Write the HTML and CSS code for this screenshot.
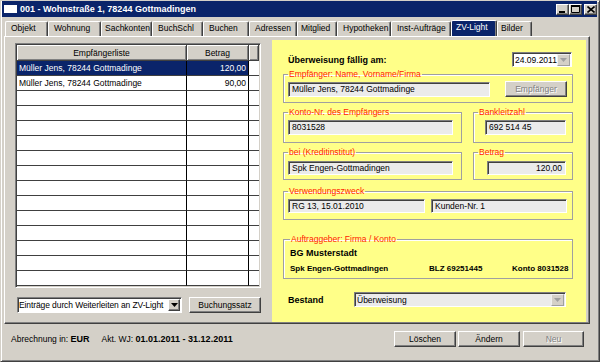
FILE: index.html
```html
<!DOCTYPE html>
<html lang="de">
<head>
  <meta charset="UTF-8" />
  <title>001 - Wohnstraße 1, 78244 Gottmadingen</title>
  <link rel="stylesheet" href="styles.css">
</head>
<body>
<div class="window">
  <div class="titlebar">
    <span class="app-icon"></span>
    <span class="title">001 - Wohnstraße 1, 78244 Gottmadingen</span>
    <div class="caption-btns">
      <span class="cbtn"><svg width="7" height="7" viewBox="0 0 7 7"><rect x="0" y="5" width="6" height="2"/></svg></span>
      <span class="cbtn"><svg width="9" height="8" viewBox="0 0 9 8"><path d="M0.5 0.5h8v7h-8z" fill="none" stroke="#000"/><rect x="0" y="0" width="9" height="2"/></svg></span>
      <span class="cbtn cbtn-close"><svg width="8" height="7" viewBox="0 0 8 7"><path d="M0.5 0.5l7 6M7.5 0.5l-7 6" stroke="#000" stroke-width="1.6"/></svg></span>
    </div>
  </div>

  <div class="tabs">
    <span class="tab">Objekt</span>
    <span class="tab">Wohnung</span>
    <span class="tab">Sachkonten</span>
    <span class="tab">BuchSchl</span>
    <span class="tab">Buchen</span>
    <span class="tab">Adressen</span>
    <span class="tab">Mitglied</span>
    <span class="tab">Hypotheken</span>
    <span class="tab">Inst-Aufträge</span>
    <span class="tab active">ZV-Light</span>
    <span class="tab">Bilder</span>
  </div>

  <div class="tabpanel">
    <div class="left">
      <div class="grid-frame">
        <table class="grid">
          <colgroup><col class="c-name"><col class="c-amount"><col class="c-pad"></colgroup>
          <thead>
            <tr><th>Empfängerliste</th><th>Betrag</th><th></th></tr>
          </thead>
          <tbody>
            <tr class="sel"><td>Müller Jens, 78244 Gottmadinge</td><td class="num">120,00</td><td></td></tr>
            <tr><td>Müller Jens, 78244 Gottmadinge</td><td class="num">90,00</td><td></td></tr>
            <tr><td></td><td></td><td></td></tr>
            <tr><td></td><td></td><td></td></tr>
            <tr><td></td><td></td><td></td></tr>
            <tr><td></td><td></td><td></td></tr>
            <tr><td></td><td></td><td></td></tr>
            <tr><td></td><td></td><td></td></tr>
            <tr><td></td><td></td><td></td></tr>
            <tr><td></td><td></td><td></td></tr>
            <tr><td></td><td></td><td></td></tr>
            <tr><td></td><td></td><td></td></tr>
            <tr><td></td><td></td><td></td></tr>
            <tr><td></td><td></td><td></td></tr>
            <tr><td></td><td></td><td></td></tr>
          </tbody>
        </table>
      </div>
      <div class="left-tools">
        <div class="combo combo-forward">
          <span class="combo-text">Einträge durch Weiterleiten an ZV-Light</span>
          <span class="combo-btn"><svg width="7" height="4" viewBox="0 0 7 4"><path d="M0 0h7L3.5 4z"/></svg></span>
        </div>
        <button class="btn btn-booking">Buchungssatz</button>
      </div>
    </div>

    <div class="zv">
      <div class="due">
        <span class="label-bold">Überweisung fällig am:</span>
        <div class="combo combo-date">
          <span class="combo-text">24.09.2011</span>
          <span class="combo-btn off"><svg width="7" height="4" viewBox="0 0 7 4"><path d="M0 0h7L3.5 4z"/></svg></span>
        </div>
      </div>

      <fieldset class="grp g-name">
        <legend>Empfänger: Name, Vorname/Firma</legend>
        <div class="row">
          <span class="edit w-name">Müller Jens, 78244 Gottmadinge</span>
          <button class="btn btn-recipient" disabled>Empfänger</button>
        </div>
      </fieldset>

      <div class="pair pair-account">
        <fieldset class="grp g-wide">
          <legend>Konto-Nr. des Empfängers</legend>
          <span class="edit w-long">8031528</span>
        </fieldset>
        <fieldset class="grp g-narrow">
          <legend>Bankleitzahl</legend>
          <span class="edit w-short">692 514 45</span>
        </fieldset>
      </div>

      <div class="pair pair-bank">
        <fieldset class="grp g-wide">
          <legend>bei (Kreditinstitut)</legend>
          <span class="edit w-long">Spk Engen-Gottmadingen</span>
        </fieldset>
        <fieldset class="grp g-narrow">
          <legend>Betrag</legend>
          <span class="edit w-amount num">120,00</span>
        </fieldset>
      </div>

      <fieldset class="grp g-purpose">
        <legend>Verwendungszweck</legend>
        <div class="row">
          <span class="edit w-purpose1">RG 13, 15.01.2010</span>
          <span class="edit w-purpose2">Kunden-Nr. 1</span>
        </div>
      </fieldset>

      <fieldset class="grp g-payer">
        <legend>Auftraggeber: Firma / Konto</legend>
        <div class="payer-name">BG Musterstadt</div>
        <div class="payer-bank">
          <span>Spk Engen-Gottmadingen</span>
          <span>BLZ 69251445</span>
          <span>Konto 8031528</span>
        </div>
      </fieldset>

      <div class="stock">
        <span class="label-bold stock-label">Bestand</span>
        <div class="combo combo-stock">
          <span class="combo-text">Überweisung</span>
          <span class="combo-btn off"><svg width="7" height="4" viewBox="0 0 7 4"><path d="M0 0h7L3.5 4z"/></svg></span>
        </div>
      </div>
    </div>
  </div>

  <div class="statusbar">
    <span class="stat">Abrechnung in: <b>EUR</b></span>
    <span class="stat stat-year">Akt. WJ: <b>01.01.2011 - 31.12.2011</b></span>
    <div class="actions">
      <button class="btn">Löschen</button>
      <button class="btn">Ändern</button>
      <button class="btn" disabled>Neu</button>
    </div>
  </div>
</div>
</body>
</html>
```

FILE: styles.css
```css
* {
  box-sizing: border-box;
}
body {
  margin: 0;
  background: #d4d0c8;
  font-family: "Liberation Sans", Arial, sans-serif;
  font-size: 8.5px;
  color: #000;
}
.window {
  width: 600px;
  height: 362px;
  border: 1px solid;
  border-color: #d4d0c8 #404040 #404040 #d4d0c8;
  box-shadow: inset 1px 1px #fff, inset -1px -1px #808080;
  padding: 0 2px 0 1px;
  display: flex;
  flex-direction: column;
}

/* title bar */
.titlebar {
  height: 16px;
  background: #0a246a;
  color: #fff;
  display: flex;
  align-items: center;
  padding-left: 2px;
}
.app-icon {
  width: 13px;
  height: 8px;
  background: #fff;
  margin-right: 3px;
}
.title {
  font-weight: bold;
  font-size: 9px;
  flex: 1;
}
.caption-btns {
  display: flex;
  align-items: center;
}
.cbtn {
  width: 13px;
  height: 11px;
  background: #d4d0c8;
  border: 1px solid;
  border-color: #fff #404040 #404040 #fff;
  box-shadow: inset -1px -1px #808080;
  display: flex;
  align-items: center;
  justify-content: center;
}
.cbtn-close {
  margin-left: 2px;
}

/* tabs */
.tabs {
  height: 19px;
  display: flex;
  align-items: flex-end;
  padding-left: 3px;
}
.tab {
  height: 15px;
  line-height: 13px;
  padding-left: 5px;
  border-top: 1px solid #fff;
  border-left: 1px solid #fff;
  border-right: 1px solid #404040;
  box-shadow: inset -1px 0 #808080;
  border-radius: 2px 2px 0 0;
  white-space: nowrap;
  overflow: hidden;
}
.tab:nth-child(1) { width: 43px; }
.tab:nth-child(2) { width: 53px; }
.tab:nth-child(3) { width: 51px; padding-left: 3px; }
.tab:nth-child(4) { width: 51px; }
.tab:nth-child(5) { width: 46px; }
.tab:nth-child(6) { width: 48px; }
.tab:nth-child(7) { width: 40px; padding-left: 3px; }
.tab:nth-child(8) { width: 54px; }
.tab:nth-child(9) { width: 60px; }
.tab:nth-child(10) { width: 46px; }
.tab:nth-child(11) { width: 35px; padding-left: 3px; }
.tab.active {
  height: 16px;
  background: #0a246a;
  color: #fff;
  padding-left: 4px;
}

/* tab page */
.tabpanel {
  width: 586px;
  height: 288px;
  margin-left: 2px;
  border: 1px solid;
  border-color: #fff #404040 #404040 #fff;
  box-shadow: inset -1px -1px #808080;
  padding: 3px 2px 1px 10px;
  display: flex;
  gap: 11px;
}
.left {
  width: 246px;
  padding-top: 3px;
}
.grid-frame {
  height: 245px;
  border: 1px solid;
  border-color: #808080 #fff #fff #808080;
  box-shadow: inset 1px 1px #404040, inset -1px -1px #d4d0c8;
  padding: 1px;
  background: #fff;
  overflow: hidden;
}
.grid {
  width: 242px;
  table-layout: fixed;
  border-collapse: separate;
  border-spacing: 0;
}
.c-name { width: 170px; }
.c-amount { width: 62px; }
.c-pad { width: 10px; }
.grid th {
  height: 16px;
  padding: 0;
  font-weight: normal;
  background: #d4d0c8;
  border-right: 1px solid #404040;
  border-bottom: 1px solid #404040;
  box-shadow: inset 1px 1px #fff, inset -1px -1px #808080;
}
.grid td {
  height: 15px;
  padding: 0 2px;
  border-right: 1px solid #000;
  border-bottom: 1px solid #404040;
  white-space: nowrap;
  overflow: hidden;
}
.grid td:last-child {
  border-right: none;
}
.grid .num {
  text-align: right;
}
.grid .sel td:not(:last-child) {
  background: #0a246a;
  color: #fff;
}
.left-tools {
  display: flex;
  align-items: center;
  margin-top: 9px;
  padding-left: 2px;
  gap: 7px;
}

/* controls */
.btn {
  font-family: inherit;
  font-size: 8.5px;
  color: #000;
  height: 16px;
  padding: 0;
  background: #d4d0c8;
  border: 1px solid;
  border-color: #fff #404040 #404040 #fff;
  box-shadow: inset -1px -1px #808080;
}
.btn:disabled {
  color: #808080;
  text-shadow: 1px 1px #fff;
}
.btn-booking {
  width: 72px;
}
.combo {
  display: flex;
  align-items: center;
  height: 16px;
  background: #fff;
  border: 1px solid;
  border-color: #808080 #fff #fff #808080;
  box-shadow: inset 1px 1px #404040;
  padding: 1px 1px 1px 2px;
}
.combo-text {
  flex: 1;
  white-space: nowrap;
  overflow: hidden;
}
.combo-btn {
  flex: none;
  width: 13px;
  height: 12px;
  background: #d4d0c8;
  border: 1px solid;
  border-color: #fff #404040 #404040 #fff;
  box-shadow: inset -1px -1px #808080;
  display: flex;
  align-items: center;
  justify-content: center;
}
.combo-btn.off {
  border-color: #f0f0f0 #a0a0a0 #a0a0a0 #f0f0f0;
  box-shadow: none;
}
.combo-btn.off svg {
  fill: #a0a0a0;
}
.combo-forward {
  width: 165px;
  padding-left: 1px;
  letter-spacing: -0.1px;
}
.combo-forward .combo-btn {
  width: 12px;
  margin-left: 2px;
}
.edit {
  display: block;
  height: 15px;
  line-height: 12px;
  padding: 0 3px;
  background: #ebebeb;
  border: 1px solid;
  border-color: #808080 #fff #fff #808080;
  box-shadow: inset 1px 1px #404040;
  white-space: nowrap;
  overflow: hidden;
}
.edit.num {
  text-align: right;
}

/* yellow transfer form */
.zv {
  width: 314px;
  height: 282px;
  background: #ffff88;
  padding: 12px 13px 0 11px;
  display: flex;
  flex-direction: column;
}
.label-bold {
  font-weight: bold;
  font-size: 9px;
}
.due {
  display: flex;
  align-items: center;
  justify-content: space-between;
  height: 15px;
  padding-left: 5px;
  margin-right: 1px;
}
.combo-date {
  width: 60px;
  height: 15px;
}
.grp {
  margin: 0;
  min-width: 0;
  border: 1px solid #a0a0a0;
  box-shadow: inset 1px 1px #fff;
  padding: 1px 5px 5px 4px;
}
.grp legend {
  padding: 0 1px;
  line-height: 11px;
  color: #ff2200;
}
.row {
  display: flex;
  align-items: flex-end;
  justify-content: space-between;
}
.g-name {
  margin-top: 2px;
}
.w-name {
  width: 202px;
}
.btn-recipient {
  width: 62px;
}
.pair {
  display: flex;
  gap: 11px;
}
.pair-account {
  margin-top: 4px;
}
.pair-account .grp {
  padding-top: 2px;
  padding-bottom: 7px;
}
.pair-bank {
  margin-top: 4px;
}
.pair-bank .grp {
  padding-top: 3px;
  padding-bottom: 4px;
}
.pair-bank .edit {
  height: 14px;
}
.g-wide {
  width: 179px;
}
.g-narrow {
  width: 100px;
}
.w-long {
  width: 165px;
}
.w-short {
  width: 81px;
  margin-left: 7px;
}
.w-amount {
  width: 79px;
  margin-left: 9px;
}
.g-purpose {
  margin-top: 6px;
  padding-top: 2px;
  padding-bottom: 6px;
}
.g-purpose .edit {
  height: 14px;
}
.w-purpose1 {
  width: 137px;
}
.w-purpose2 {
  width: 136px;
}
.g-payer {
  margin-top: 14px;
  padding: 3px 5px 4px 6px;
}
.payer-name {
  font-weight: bold;
  font-size: 9px;
  line-height: 11px;
}
.payer-bank {
  display: grid;
  grid-template-columns: 139px 83px 1fr;
  margin-top: 5px;
  font-weight: bold;
  font-size: 8px;
  line-height: 10px;
  white-space: nowrap;
}
.stock {
  display: flex;
  align-items: center;
  margin-top: 13px;
  padding-left: 5px;
}
.stock-label {
  width: 66px;
}
.combo-stock {
  width: 212px;
  height: 15px;
  background: #ebebeb;
}

/* status bar */
.statusbar {
  flex: 1;
  display: flex;
  align-items: center;
  padding: 0 13px 7px 9px;
}
.stat b {
  font-size: 9px;
}
.stat-year {
  margin-left: 12px;
}
.actions {
  margin-left: auto;
  display: flex;
  gap: 2px;
}
.actions .btn {
  width: 62px;
}
.actions .btn:last-child {
  width: 61px;
  margin-left: 1px;
}
```
